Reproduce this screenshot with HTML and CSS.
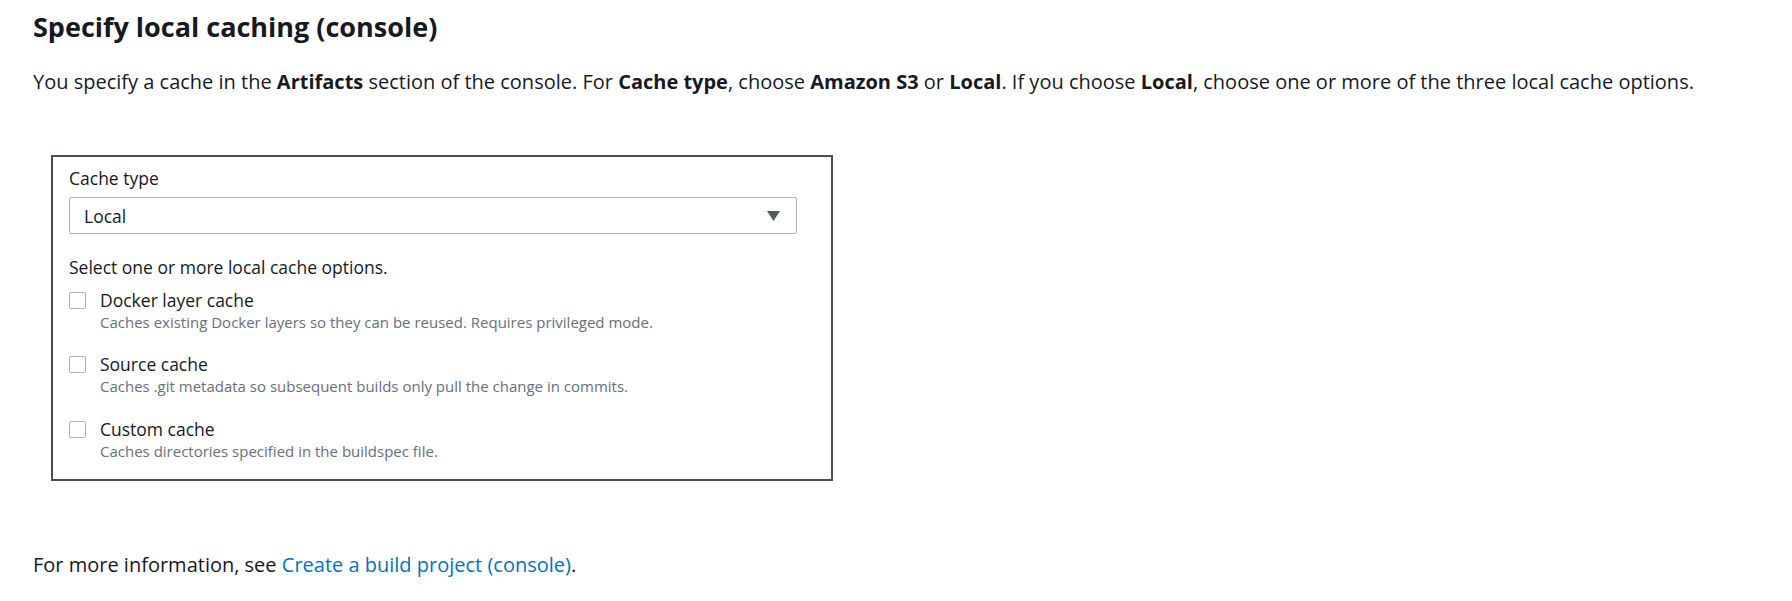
FILE: index.html
```html
<!DOCTYPE html>
<html lang="en">
<head>
<meta charset="utf-8">
<title>Specify local caching (console)</title>
<link rel="stylesheet" href="styles.css">
</head>
<body>
<main class="page">
  <h1 class="title">Specify local caching (console)</h1>
  <p class="intro">You specify a cache in the <b>Artifacts</b> section of the console. For <b>Cache type</b>, choose <b>Amazon S3</b> or <b>Local</b>. If you choose <b>Local</b>, choose one or more of the three local cache options.</p>
  <div class="shot">
    <div class="field-label">Cache type</div>
    <div class="select">
      <span class="select-value">Local</span>
      <svg class="caret" width="13" height="10" viewBox="0 0 13 10"><path d="M0 0 H13 L6.5 10 Z" fill="#545b64"/></svg>
    </div>
    <div class="options-label">Select one or more local cache options.</div>
    <div class="option">
      <span class="box"></span>
      <div class="option-text">
        <div class="option-title">Docker layer cache</div>
        <div class="option-desc">Caches existing Docker layers so they can be reused. Requires privileged mode.</div>
      </div>
    </div>
    <div class="option">
      <span class="box"></span>
      <div class="option-text">
        <div class="option-title">Source cache</div>
        <div class="option-desc">Caches .git metadata so subsequent builds only pull the change in commits.</div>
      </div>
    </div>
    <div class="option">
      <span class="box"></span>
      <div class="option-text">
        <div class="option-title">Custom cache</div>
        <div class="option-desc">Caches directories specified in the buildspec file.</div>
      </div>
    </div>
  </div>
  <p class="more">For more information, see <a class="link" href="#">Create a build project (console)</a>.</p>
</main>
</body>
</html>
```

FILE: styles.css
```css
html, body {
  margin: 0;
  padding: 0;
  background: #ffffff;
}
.page {
  padding: 0 33px;
  font-family: "Open Sans", "Noto Sans", sans-serif;
  color: #16191f;
}
.title {
  margin: 0;
  padding-top: 9px;
  font-size: 27px;
  line-height: 36px;
  font-weight: 700;
}
.intro {
  margin: 22px 0 0 0;
  font-size: 20px;
  line-height: 30px;
}
.intro b { font-weight: 700; }
.shot {
  margin: 58px 0 0 18px;
  width: 762px;
  height: 322px;
  border: 2px solid #4a4f57;
  box-sizing: content-box;
  padding: 0 0 0 16px;
  display: flex;
  flex-direction: column;
}
.field-label {
  margin-top: 9px;
  font-size: 17.5px;
  line-height: 24px;
  color: #16191f;
}
.select {
  margin-top: 7px;
  width: 728px;
  height: 37px;
  box-sizing: border-box;
  border: 1px solid #aab7b8;
  border-radius: 2px;
  display: flex;
  align-items: center;
  justify-content: space-between;
  padding: 0 16px 0 14px;
}
.select-value {
  font-size: 17.5px;
  color: #16191f;
}
.caret { display: block; }
.options-label {
  margin-top: 21px;
  font-size: 17.5px;
  line-height: 24px;
}
.option {
  display: flex;
  align-items: flex-start;
  margin-top: 8.5px;
}
.option + .option { margin-top: 20.5px; }
.box {
  width: 17px;
  height: 17px;
  box-sizing: border-box;
  border: 1px solid #aab7b8;
  border-radius: 2px;
  margin-top: 4px;
  margin-right: 14px;
  flex: none;
}
.option-title {
  font-size: 17.5px;
  line-height: 24px;
}
.option-desc {
  font-size: 15px;
  line-height: 20px;
  color: #687078;
}
.more {
  margin: 68.5px 0 0 0;
  font-size: 20px;
  line-height: 30px;
}
.link {
  color: #0073bb;
  text-decoration: none;
}
```
